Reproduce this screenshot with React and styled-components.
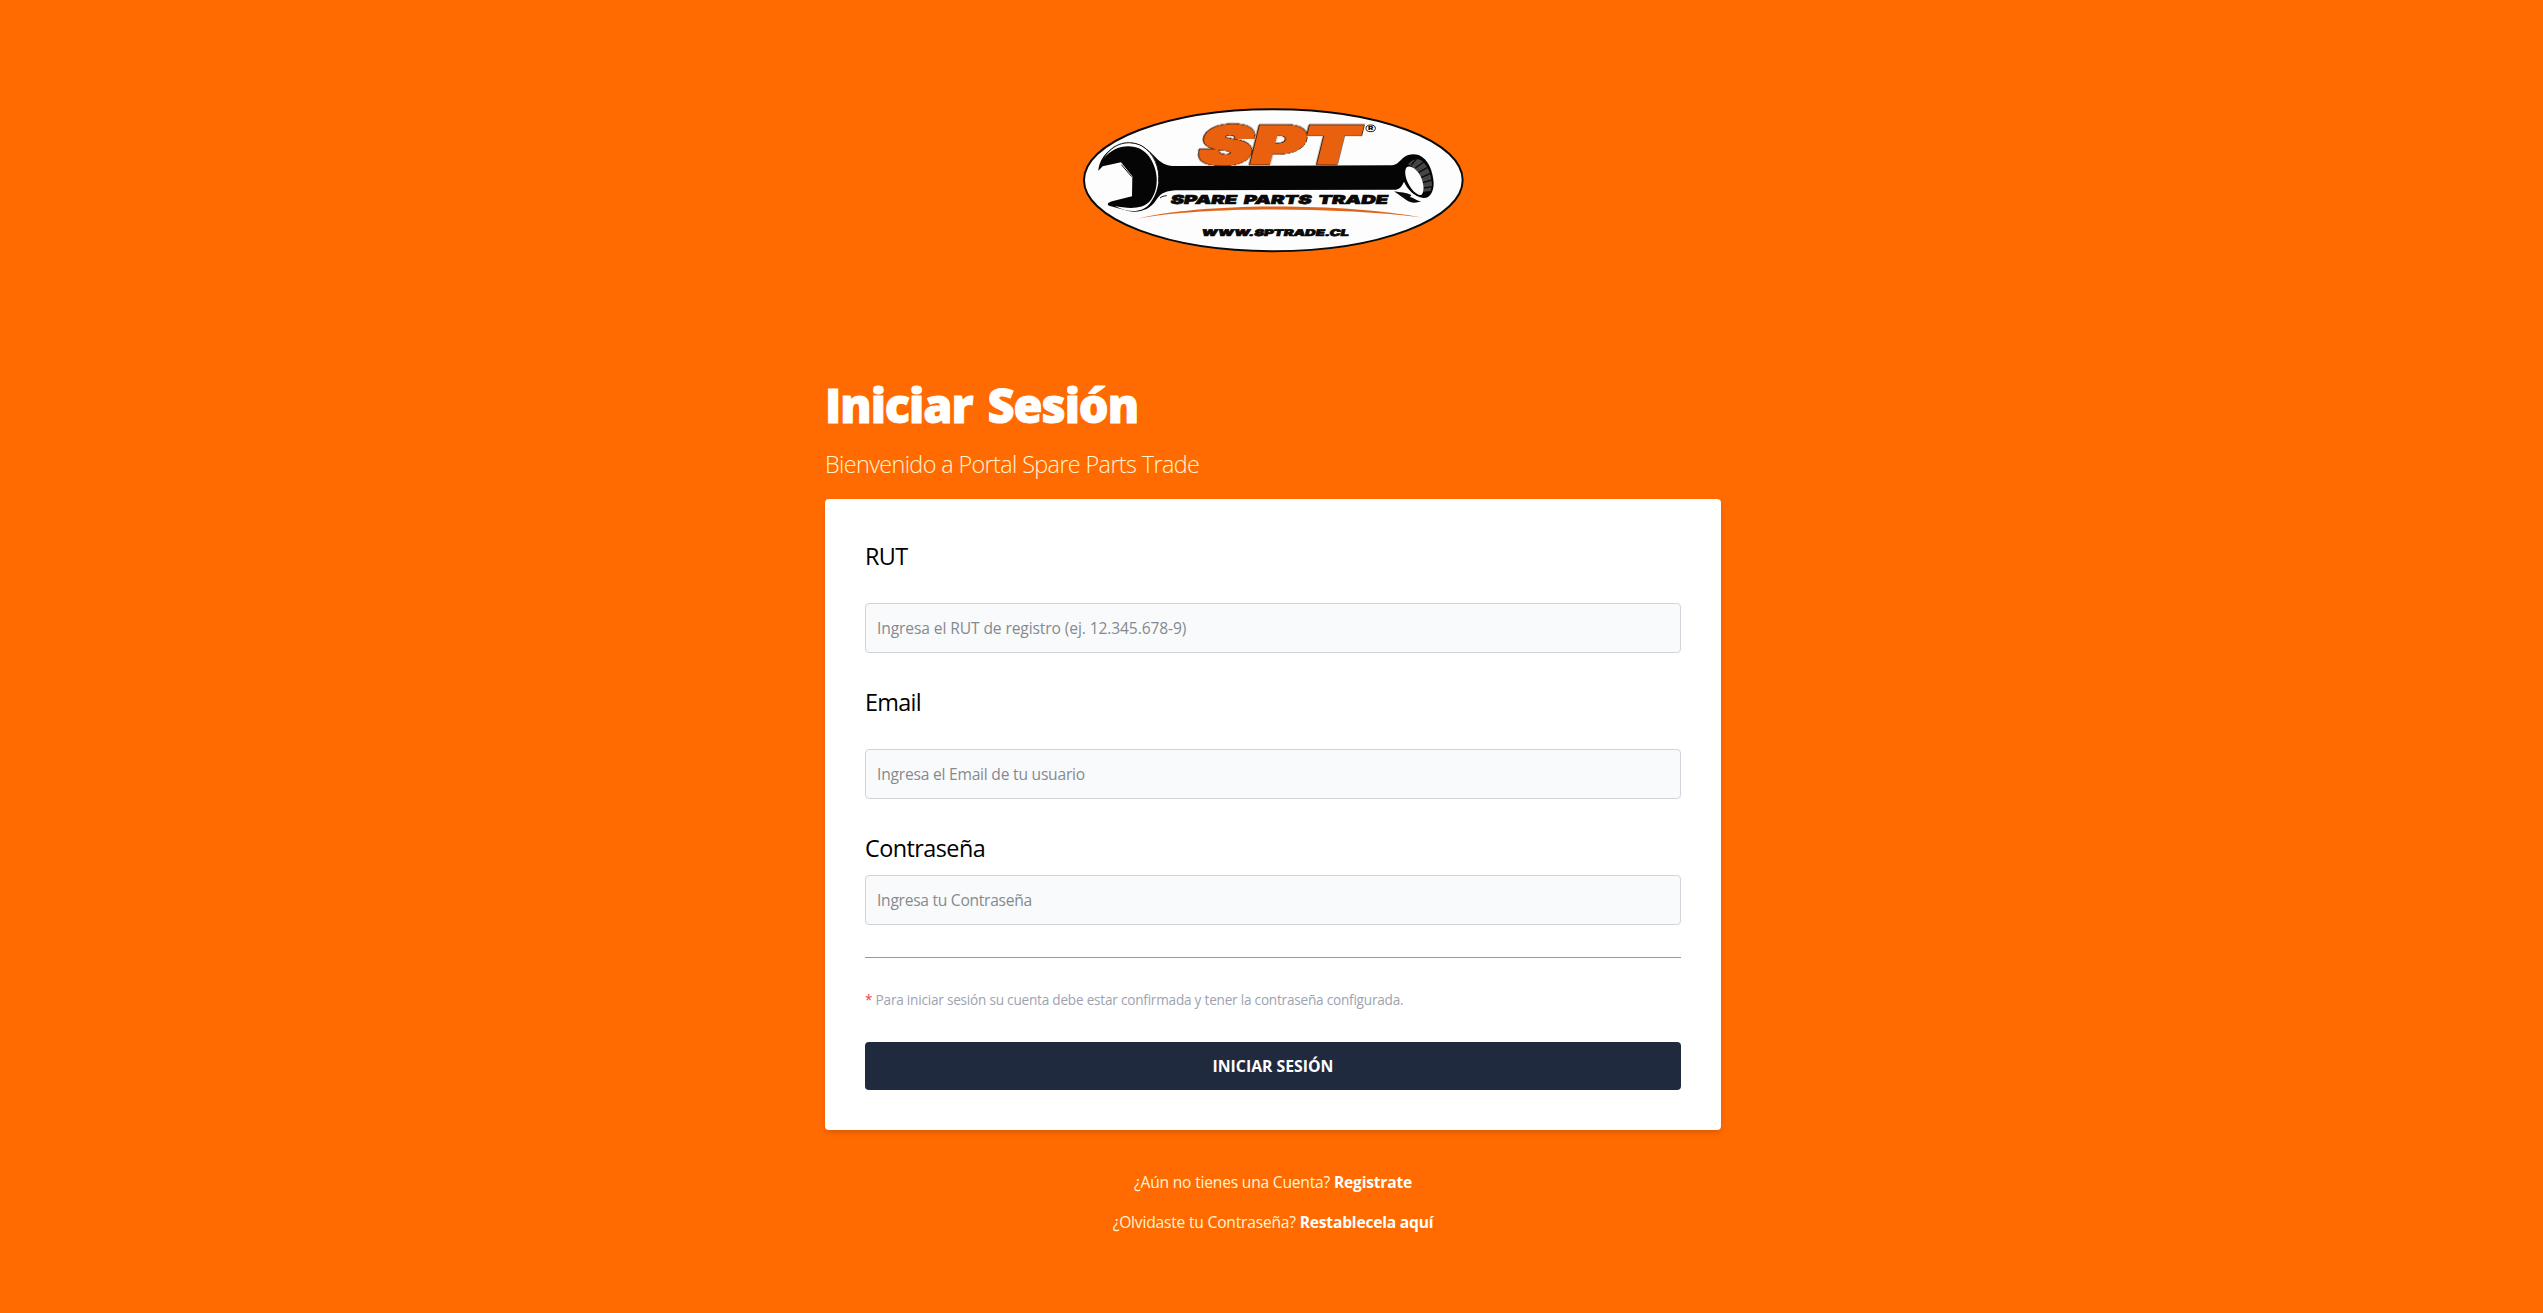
import React from "react";
import styled, { createGlobalStyle } from "styled-components";

const GlobalStyle = createGlobalStyle`
  *, *::before, *::after { box-sizing: border-box; }
  html, body { margin: 0; padding: 0; background: #ff6b00; }
  body { font-family: "Segoe UI", "Open Sans", "Noto Sans", sans-serif; font-size: 16px; line-height: 24px; }
`;

const Page = styled.main`
  min-height: 1313px;
  padding: 103px 0 0 3px;
  display: flex;
  flex-direction: column;
  align-items: center;
  background: #ff6b00;
  overflow: hidden;
`;

const LogoImage = styled.svg`
  display: block;
  width: 390px;
  height: 152px;
`;

const Content = styled.section`
  width: 896px;
  margin-top: 124px;
  color: #fff;
`;

const Title = styled.h1`
  margin: 0;
  font-size: 47px;
  font-weight: 800;
  line-height: 52px;
  letter-spacing: -1.1px;
  word-spacing: 4px;
  -webkit-text-stroke: 0.9px #fff;
  white-space: nowrap;
`;

const Subtitle = styled.p`
  margin: 16px 0 18px;
  font-size: 23.4px;
  font-weight: 300;
  line-height: 34px;
  letter-spacing: -0.62px;
  color: #fff3d6;
`;

const Card = styled.form`
  padding: 40px;
  height: 631px;
  background: #fff;
  border-radius: 4px;
  box-shadow: 0 4px 6px -1px rgba(0, 0, 0, 0.1), 0 2px 4px -1px rgba(0, 0, 0, 0.06);
`;

const Field = styled.div`
  display: flex;
  flex-direction: column;
  gap: ${(p) => p.$gap}px;
  margin-bottom: 32px;
`;

const Label = styled.label`
  height: 32px;
  font-size: 23.4px;
  line-height: 34px;
  letter-spacing: ${(p) => p.$spacing}px;
  color: #000;
`;

const Input = styled.input`
  width: 100%;
  height: 50px;
  padding: 0 12px 0 11px;
  border: 1px solid #d1d5db;
  border-radius: 4px;
  background: #f9fafb;
  font-family: inherit;
  font-size: 15.6px;
  letter-spacing: ${(p) => p.$spacing}px;
  outline: none;
  &::placeholder { color: #858a8f; opacity: 1; }
`;

const Divider = styled.hr`
  margin: 0;
  height: 1px;
  border: 0;
  background: #979b9f;
`;

const Note = styled.p`
  margin: 32px 0;
  font-size: 13.6px;
  line-height: 20px;
  letter-spacing: -0.22px;
  color: #9ca3af;
`;

const Required = styled.span`
  color: #ef4444;
`;

const Submit = styled.button`
  display: block;
  width: 100%;
  height: 48px;
  padding: 0;
  border: 0;
  border-radius: 4px;
  background: #1f2a3e;
  color: #fff;
  font-family: inherit;
  font-size: 15.8px;
  font-weight: 700;
  letter-spacing: 0;
`;

const Links = styled.div`
  display: flex;
  flex-direction: column;
  align-items: center;
  gap: 16px;
  margin-top: 40px;
`;

const Prompt = styled.p`
  margin: 0;
  font-size: 15.6px;
  line-height: 24px;
  letter-spacing: -0.2px;
  color: #fff3d6;
`;

const Action = styled.a`
  font-weight: 700;
  color: #fff;
`;

const LogoText = styled.text`
  font-family: "Inter", sans-serif;
  font-weight: 900;
  fill: #080808;
  stroke: #080808;
  stroke-width: ${(p) => p.$weight || 0}px;
`;

const Brand = styled(LogoText)`
  fill: #e9610f;
  stroke: #e9610f;
  stroke-linejoin: miter;
  filter: drop-shadow(0.8px 0 0 #2a1205) drop-shadow(-0.8px 0 0 #2a1205)
    drop-shadow(0 0.8px 0 #2a1205) drop-shadow(0 -0.8px 0 #2a1205);
`;

function Logo() {
  return (
    <LogoImage viewBox="24 24 1170 456" role="img" aria-label="Spare Parts Trade">
      <ellipse cx="610" cy="255.5" rx="568" ry="213" fill="#fdfdfd" stroke="#0b0b0b" strokeWidth="6" />
      <Brand $weight={9} transform="translate(379 205) skewX(-14)" fontSize="152" textLength="474" lengthAdjust="spacingAndGlyphs">SPT</Brand>
      <ellipse cx="902" cy="100" rx="14" ry="10" fill="none" stroke="#111" strokeWidth="3" />
      <LogoText x="894" y="106" fontSize="16" textLength="16" lengthAdjust="spacingAndGlyphs">R</LogoText>
      <path d="M85 227 C88 190 118 147 184 143 C222 145 248 178 264 194 C280 207 292 213 318 213 L965 211 C983 210 989 196 1003 186 C1013 178 1030 176 1046 180 C1076 192 1089 230 1091 264 C1091 291 1080 310 1060 309 C1032 304 1012 283 1002 260 C997 271 990 282 978 284 L318 286 C291 288 274 291 258 316 C240 344 210 354 178 349 L117 332 C110 328 113 323 126 319 L186 304 L187 244 L153 202 L98 214 Z" fill="#050505" />
      <path d="M99 193 C135 143 209 140 240 188 C270 235 264 289 240 318 C218 344 174 341 134 333 C171 352 216 357 241 324 C273 284 275 217 244 178 C207 128 134 134 99 193 Z" fill="#fdfdfd" />
      <path d="M99 191 C129 142 177 133 216 153 C251 174 270 218 266 260" fill="none" stroke="#111" strokeWidth="3" />
      <path d="M154 209 L185 245 M270 309 C276 304 282 303 290 302" fill="none" stroke="#111" strokeWidth="3" />
      <path d="M1014 208 C1022 196 1040 188 1052 195 C1074 209 1085 243 1086 270 L1082 288 L1060 290 C1062 270 1046 230 1024 213 Z" fill="#454545" />
      <path d="M1024 210 L1040 191 M1036 219 L1061 201 M1045 233 L1073 217 M1053 248 L1080 236 M1058 263 L1086 255 M1061 279 L1088 275" stroke="#0a0a0a" strokeWidth="4" />
      <path d="M1010 217 C1021 209 1040 223 1050 241 C1062 263 1064 291 1055 299 C1043 305 1022 283 1013 262 C1005 244 1003 225 1010 217 Z" fill="#fdfdfd" />
      <path d="M972 289 C990 292 1010 293 1024 300 L1020 306 C1029 307 1038 317 1054 319 C1038 325 1022 325 1010 316 Z" fill="#090909" />
      <path d="M1003 276 Q1024 299 1050 314" fill="none" stroke="#fdfdfd" strokeWidth="4" />
      <LogoText $weight={2} transform="translate(300 328) skewX(-12)" fontSize="37" textLength="652" lengthAdjust="spacingAndGlyphs" wordSpacing="5">SPARE PARTS TRADE</LogoText>
      <path d="M203 371 C380 325 800 320 1062 368 C800 336 400 334 203 371 Z" fill="#df651c" />
      <LogoText $weight={2} transform="translate(394 423) skewX(-12)" fontSize="28" textLength="441" lengthAdjust="spacingAndGlyphs">WWW.SPTRADE.CL</LogoText>
    </LogoImage>
  );
}

export default function App() {
  return (
    <>
      <GlobalStyle />
      <Page>
        <Logo />
        <Content>
          <Title>Iniciar Sesión</Title>
          <Subtitle>Bienvenido a Portal Spare Parts Trade</Subtitle>
          <Card onSubmit={(e) => e.preventDefault()}>
            <Field $gap={32}>
              <Label htmlFor="rut" $spacing={-0.6}>RUT</Label>
              <Input id="rut" $spacing={-0.11} placeholder="Ingresa el RUT de registro (ej. 12.345.678-9)" />
            </Field>
            <Field $gap={32}>
              <Label htmlFor="email" $spacing={-0.7}>Email</Label>
              <Input id="email" $spacing={-0.22} placeholder="Ingresa el Email de tu usuario" />
            </Field>
            <Field $gap={12}>
              <Label htmlFor="password" $spacing={-0.55}>Contraseña</Label>
              <Input id="password" type="password" $spacing={-0.27} placeholder="Ingresa tu Contraseña" />
            </Field>
            <Divider />
            <Note>
              <Required>*</Required> Para iniciar sesión su cuenta debe estar confirmada y tener la contraseña configurada.
            </Note>
            <Submit type="submit">INICIAR SESIÓN</Submit>
          </Card>
          <Links>
            <Prompt>¿Aún no tienes una Cuenta? <Action>Registrate</Action></Prompt>
            <Prompt>¿Olvidaste tu Contraseña? <Action>Restablecela aquí</Action></Prompt>
          </Links>
        </Content>
      </Page>
    </>
  );
}
